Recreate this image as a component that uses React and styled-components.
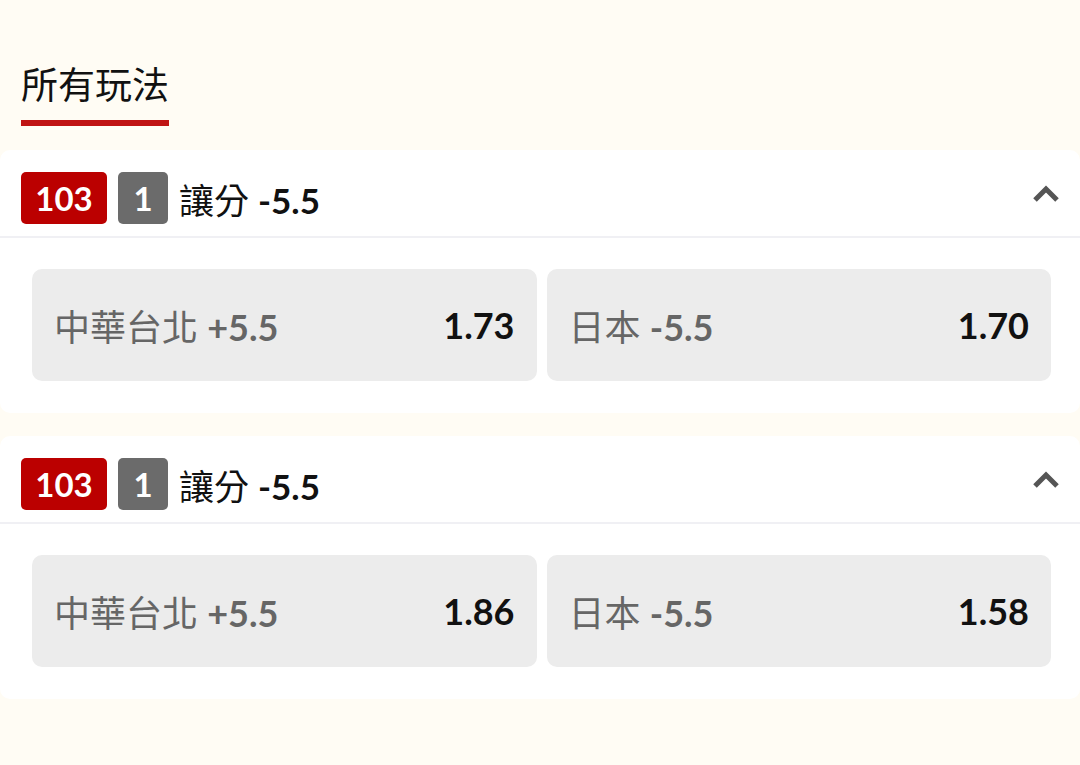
import styled, { createGlobalStyle } from "styled-components";

const GlobalStyle = createGlobalStyle`
  html, body {
    margin: 0;
    padding: 0;
    background: #fffcf4;
  }
  body {
    font-family: "Lato", "Noto Sans CJK TC", sans-serif;
  }
`;

const Page = styled.div`
  min-height: 100vh;
  box-sizing: border-box;
  background: #fffcf4;
  overflow: hidden;
`;

const TabBar = styled.div`
  display: flex;
  padding: 63px 21px 0;
  margin-bottom: 24px;
`;

const Tab = styled.div`
  display: flex;
  flex-direction: column;
  font-size: 37px;
  line-height: 44px;
  color: #111;
`;

const TabLine = styled.div`
  height: 6px;
  background: #c01414;
  margin-top: 13px;
`;

const Market = styled.div`
  background: #fff;
  border-radius: 10px;
  margin-bottom: 23px;
`;

const Header = styled.div`
  display: flex;
  align-items: center;
  padding: 22px 21px 12px;
  border-bottom: 2px solid #f0f0f4;
`;

const Badge = styled.div`
  height: 52px;
  min-width: ${(p) => p.width}px;
  box-sizing: border-box;
  border-radius: 5px;
  background: ${(p) => p.color};
  color: #fff;
  font-size: 33px;
  font-weight: 700;
  display: flex;
  align-items: center;
  justify-content: center;
  margin-right: 11px;
`;

const MarketName = styled.div`
  font-size: 35px;
  color: #111;
  margin-left: 0;
  flex: 1;
  b {
    font-weight: 700;
  }
`;

const Toggle = styled.div`
  display: flex;
  align-items: center;
  margin-right: 0;
  margin-top: -8px;
`;

const Body = styled.div`
  display: grid;
  grid-template-columns: 1fr 1fr;
  gap: 10px;
  padding: 31px 29px 32px 32px;
`;

const Option = styled.div`
  height: 112px;
  border-radius: 10px;
  background: #ececec;
  display: flex;
  align-items: center;
  justify-content: space-between;
  padding: 0 22px 0 22px;
`;

const Pick = styled.div`
  font-size: 36px;
  color: #666;
  b {
    font-weight: 700;
  }
`;

const Odds = styled.div`
  font-size: 36px;
  font-weight: 700;
  color: #111;
`;

const Chevron = () => (
  <svg width="26" height="18" viewBox="0 0 26 18">
    <polyline
      points="2,15 13,4 24,15"
      fill="none"
      stroke="#555"
      strokeWidth="5"
      strokeLinejoin="miter"
    />
  </svg>
);

const markets = [
  { id: 1, home: "1.73", away: "1.70" },
  { id: 2, home: "1.86", away: "1.58" },
];

const App = () => {
  return (
    <Page>
      <GlobalStyle />
      <TabBar>
        <Tab>
          所有玩法
          <TabLine />
        </Tab>
      </TabBar>
      {markets.map((m) => (
        <Market key={m.id}>
          <Header>
            <Badge color="#bb0000" width={86}>103</Badge>
            <Badge color="#6b6b6b" width={50}>1</Badge>
            <MarketName>
              讓分 <b>-5.5</b>
            </MarketName>
            <Toggle>
              <Chevron />
            </Toggle>
          </Header>
          <Body>
            <Option>
              <Pick>
                中華台北 <b>+5.5</b>
              </Pick>
              <Odds>{m.home}</Odds>
            </Option>
            <Option>
              <Pick>
                日本 <b>-5.5</b>
              </Pick>
              <Odds>{m.away}</Odds>
            </Option>
          </Body>
        </Market>
      ))}
    </Page>
  );
};

export default App;
